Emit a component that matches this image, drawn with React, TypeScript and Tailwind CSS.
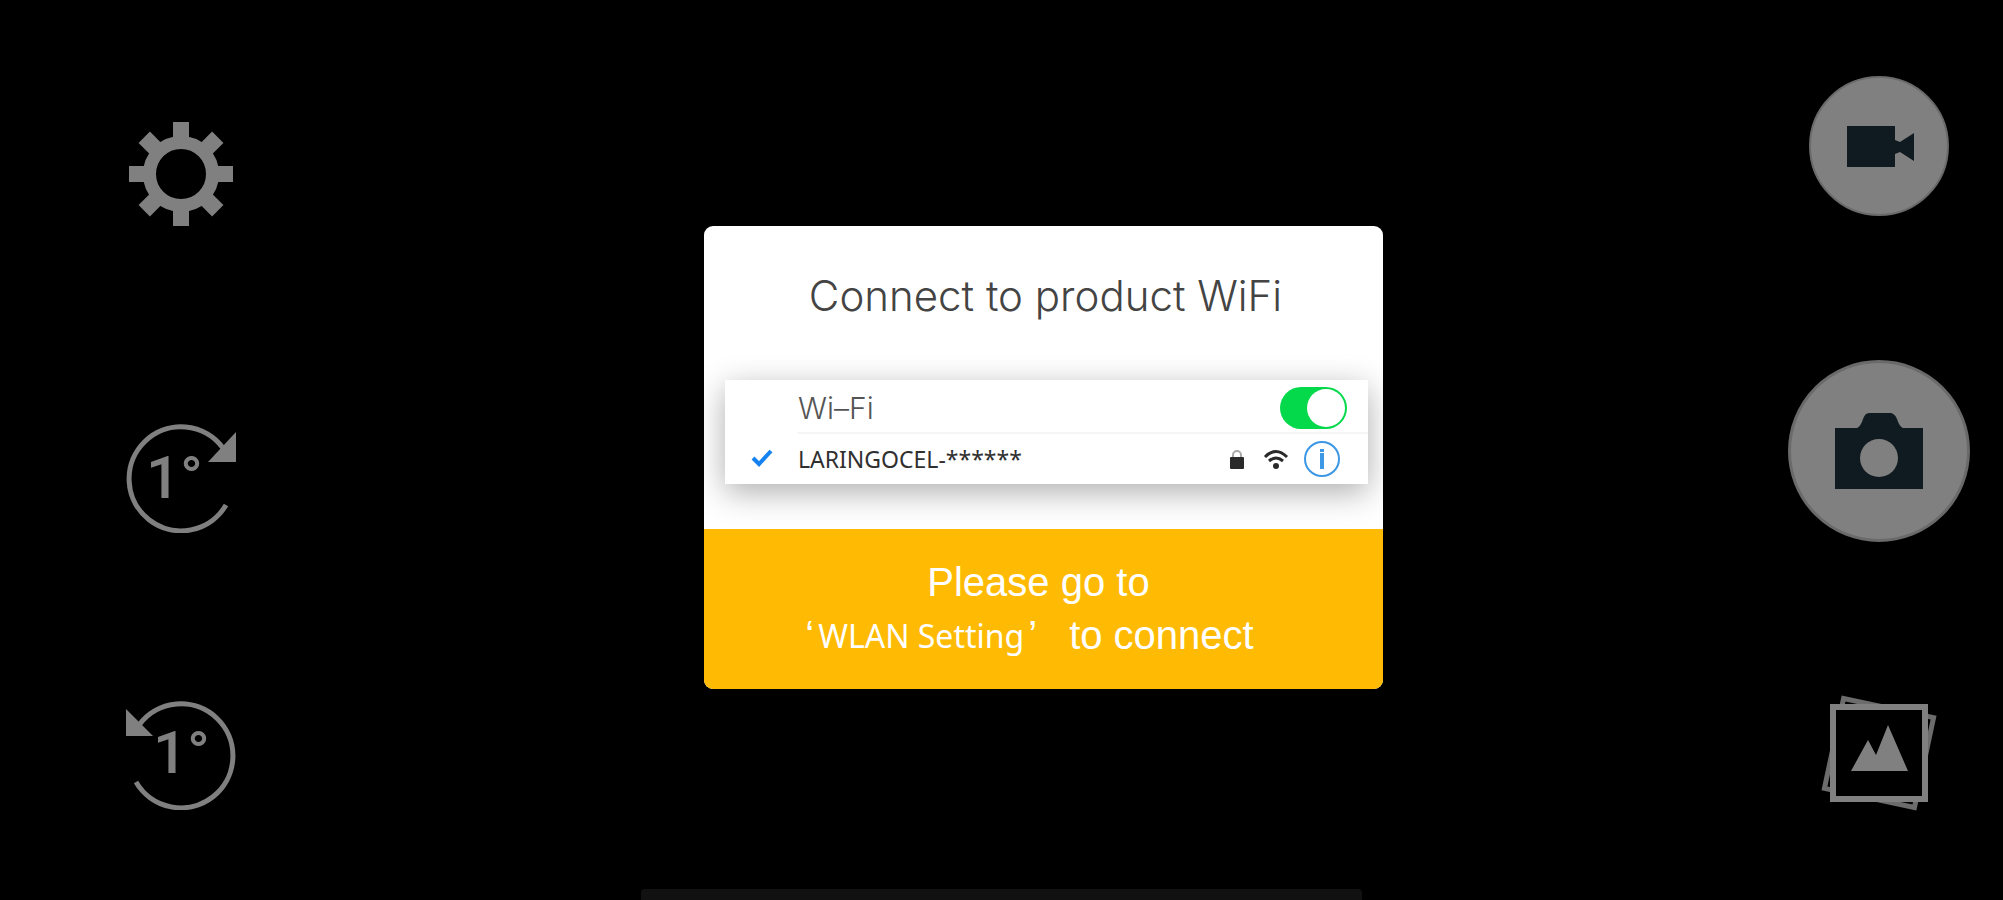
import { useState } from 'react';

const iconButton = 'flex items-center justify-center cursor-pointer';

function GearIcon() {
  return (
    <svg width="110" height="110" viewBox="-55 -55 110 110" fill="#808080" aria-hidden="true">
      {[0, 45, 90, 135].map((angle) => (
        <g key={angle} transform={`rotate(${angle})`}>
          <rect x="-8" y="-52" width="16" height="20" />
          <rect x="-8" y="32" width="16" height="20" />
        </g>
      ))}
      <circle r="31.5" fill="none" stroke="#808080" strokeWidth="13" />
    </svg>
  );
}

function RotateRightIcon() {
  return (
    <svg width="110" height="110" viewBox="-55 -55 110 110" aria-hidden="true">
      <path d="M45 27A52 52 0 1 1 42 -30" fill="none" stroke="#808080" strokeWidth="5" />
      <path d="M55 -46V-16H27Z" fill="#808080" />
      <text x="-35" y="20" fill="#808080" fontFamily="Roboto, sans-serif" fontSize="60" fontWeight="500">1°</text>
    </svg>
  );
}

function RotateLeftIcon() {
  return (
    <svg width="110" height="110" viewBox="-55 -55 110 110" aria-hidden="true">
      <path d="M-45 27A52 52 0 1 0 -42 -30" fill="none" stroke="#808080" strokeWidth="5" />
      <path d="M-55 -46V-19H-28Z" fill="#808080" />
      <text x="-28" y="18" fill="#808080" fontFamily="Roboto, sans-serif" fontSize="60" fontWeight="500">1°</text>
    </svg>
  );
}

function VideoIcon() {
  return (
    <svg width="70" height="44" viewBox="-2 -1 70 44" fill="#101b21" aria-hidden="true">
      <path d="M1 1H49V15L54 17L68 8V36L54 27L49 29V42H1Z" />
    </svg>
  );
}

function CameraIcon() {
  return (
    <svg width="88" height="76" viewBox="0 0 88 76" aria-hidden="true">
      <path d="M0 15H22Q26 13 28 6Q30 0 34 0H56Q60 1 62 6Q64 13 68 15H88V76H0Z" fill="#101b21" />
      <circle cx="44" cy="45" r="19" fill="#808080" />
    </svg>
  );
}

function GalleryIcon() {
  return (
    <svg width="120" height="120" viewBox="-60 -60 120 120" aria-hidden="true">
      <rect x="-46" y="-46" width="92" height="92" transform="rotate(12)" fill="none" stroke="#6c6c6c" strokeWidth="5" />
      <rect x="-46" y="-46" width="92" height="92" fill="#000000" stroke="#808080" strokeWidth="6" />
      <path d="M-28 18L-11 -13L-3 2L9 -28L29 18Z" fill="#808080" />
    </svg>
  );
}

function CheckIcon() {
  return (
    <svg width="22" height="18" viewBox="0 0 22 18" fill="none" stroke="#1482f0" strokeWidth="4" aria-hidden="true">
      <path d="M2 9L8 15L20 2" />
    </svg>
  );
}

function LockIcon() {
  return (
    <svg width="16" height="21" viewBox="0 0 16 21" aria-hidden="true">
      <path d="M4 10V6A4 4 0 0 1 12 6V10" fill="none" stroke="#aaaaaa" strokeWidth="2" />
      <rect x="1" y="8" width="14" height="12" rx="1" fill="#2a2a2a" />
    </svg>
  );
}

function WifiIcon() {
  return (
    <svg width="26" height="21" viewBox="0 0 26 21" fill="none" stroke="#2a2a2a" aria-hidden="true">
      <path d="M2 8Q13 -3 24 8" strokeWidth="3" />
      <path d="M6 12Q13 6 20 12" strokeWidth="3" />
      <circle cx="13" cy="17" r="3" fill="#2a2a2a" stroke="none" />
    </svg>
  );
}

function InfoIcon() {
  return (
    <svg width="38" height="38" viewBox="0 0 38 38" fill="none" stroke="#3c97e4" aria-hidden="true">
      <circle cx="19" cy="19" r="17" strokeWidth="2" />
      <path d="M19 9V12M19 13V29" strokeWidth="4" />
    </svg>
  );
}

function WifiPanel() {
  const [enabled, setEnabled] = useState(true);

  return (
    <div className="ml-[21px] mr-[15px] bg-white shadow-[0_8px_30px_rgba(0,0,0,0.32)]">
      <div className="flex h-[52px] items-center pl-[73px] pr-[21px] pt-1">
        <label htmlFor="wifi" className="flex-1 font-['Inter',sans-serif] text-[30px] font-light text-[#555555]">
          Wi–Fi
        </label>
        <span className="relative flex">
          <input
            id="wifi"
            type="checkbox"
            role="switch"
            checked={enabled}
            onChange={(e) => setEnabled(e.target.checked)}
            className="peer h-[42px] w-[67px] cursor-pointer appearance-none rounded-full bg-[#c8c8c8] checked:bg-[#04d94c]"
          />
          <span className="pointer-events-none absolute left-[2px] top-[2px] size-[38px] rounded-full bg-white peer-checked:left-[27px]" />
        </span>
      </div>
      <div className="flex h-[52px] items-center">
        <span className="flex w-[73px] pl-[26px]">
          <CheckIcon />
        </span>
        <div className="flex h-full flex-1 items-center border-t-2 border-[#f5f5f5] pr-[27px]">
          <span className="flex-1 font-['Noto_Sans',sans-serif] text-[23px] text-[#303030]">LARINGOCEL-******</span>
          <span className="mr-[18px]">
            <LockIcon />
          </span>
          <span className="mr-[14px]">
            <WifiIcon />
          </span>
          <button type="button" aria-label="Network details" className="cursor-pointer">
            <InfoIcon />
          </button>
        </div>
      </div>
    </div>
  );
}

function ConnectDialog() {
  return (
    <section
      role="dialog"
      aria-labelledby="dialog-title"
      className="w-full max-w-[679px] overflow-hidden rounded-[9px] bg-white"
    >
      <h1
        id="dialog-title"
        className="pb-[60px] pl-1 pt-[46px] text-center font-['Inter',sans-serif] text-[42px] font-light leading-[48px] text-[#444444]"
      >
        Connect to product WiFi
      </h1>
      <WifiPanel />
      <button
        type="button"
        className="relative mt-[45px] flex w-full cursor-pointer flex-col items-center bg-[#ffbb03] pb-[27px] pt-[27px] font-['Liberation_Sans',sans-serif] text-[40px] leading-[53px] text-white"
      >
        <span className="pr-[10px]">Please go to</span>
        <span className="flex pr-[28px]">
          ‘<span className="px-1 font-['Noto_Sans',sans-serif] text-[32px]">WLAN Setting</span>’
          <span className="pl-8">to connect</span>
        </span>
      </button>
    </section>
  );
}

export default function App() {
  return (
    <div className="flex min-h-screen flex-col bg-black">
      <div className="flex flex-1">
        <nav aria-label="View controls" className="flex flex-col justify-between pb-[79px] pl-[126px] pr-24 pt-[92px]">
          <button type="button" aria-label="Settings" className={`${iconButton} h-[164px]`}>
            <GearIcon />
          </button>
          <button type="button" aria-label="Rotate right one degree" className={iconButton}>
            <RotateRightIcon />
          </button>
          <button type="button" aria-label="Rotate left one degree" className={iconButton}>
            <RotateLeftIcon />
          </button>
        </nav>

        <main className="flex flex-1 items-center justify-center pt-[26px]">
          <ConnectDialog />
        </main>

        <nav aria-label="Capture controls" className="flex flex-col items-center justify-between px-[33px] pb-[69px] pt-[76px]">
          <button type="button" aria-label="Record video" className={`${iconButton} size-[140px] rounded-full border-2 border-[#6a6a6a] bg-[#808080]`}>
            <VideoIcon />
          </button>
          <button type="button" aria-label="Take photo" className={`${iconButton} size-[182px] rounded-full border-3 border-[#6a6a6a] bg-[#808080]`}>
            <CameraIcon />
          </button>
          <button type="button" aria-label="Gallery" className={`${iconButton} size-[134px]`}>
            <GalleryIcon />
          </button>
        </nav>
      </div>
      <div className="mx-auto h-[11px] w-9/25 rounded-t bg-[#111111]" />
    </div>
  );
}
